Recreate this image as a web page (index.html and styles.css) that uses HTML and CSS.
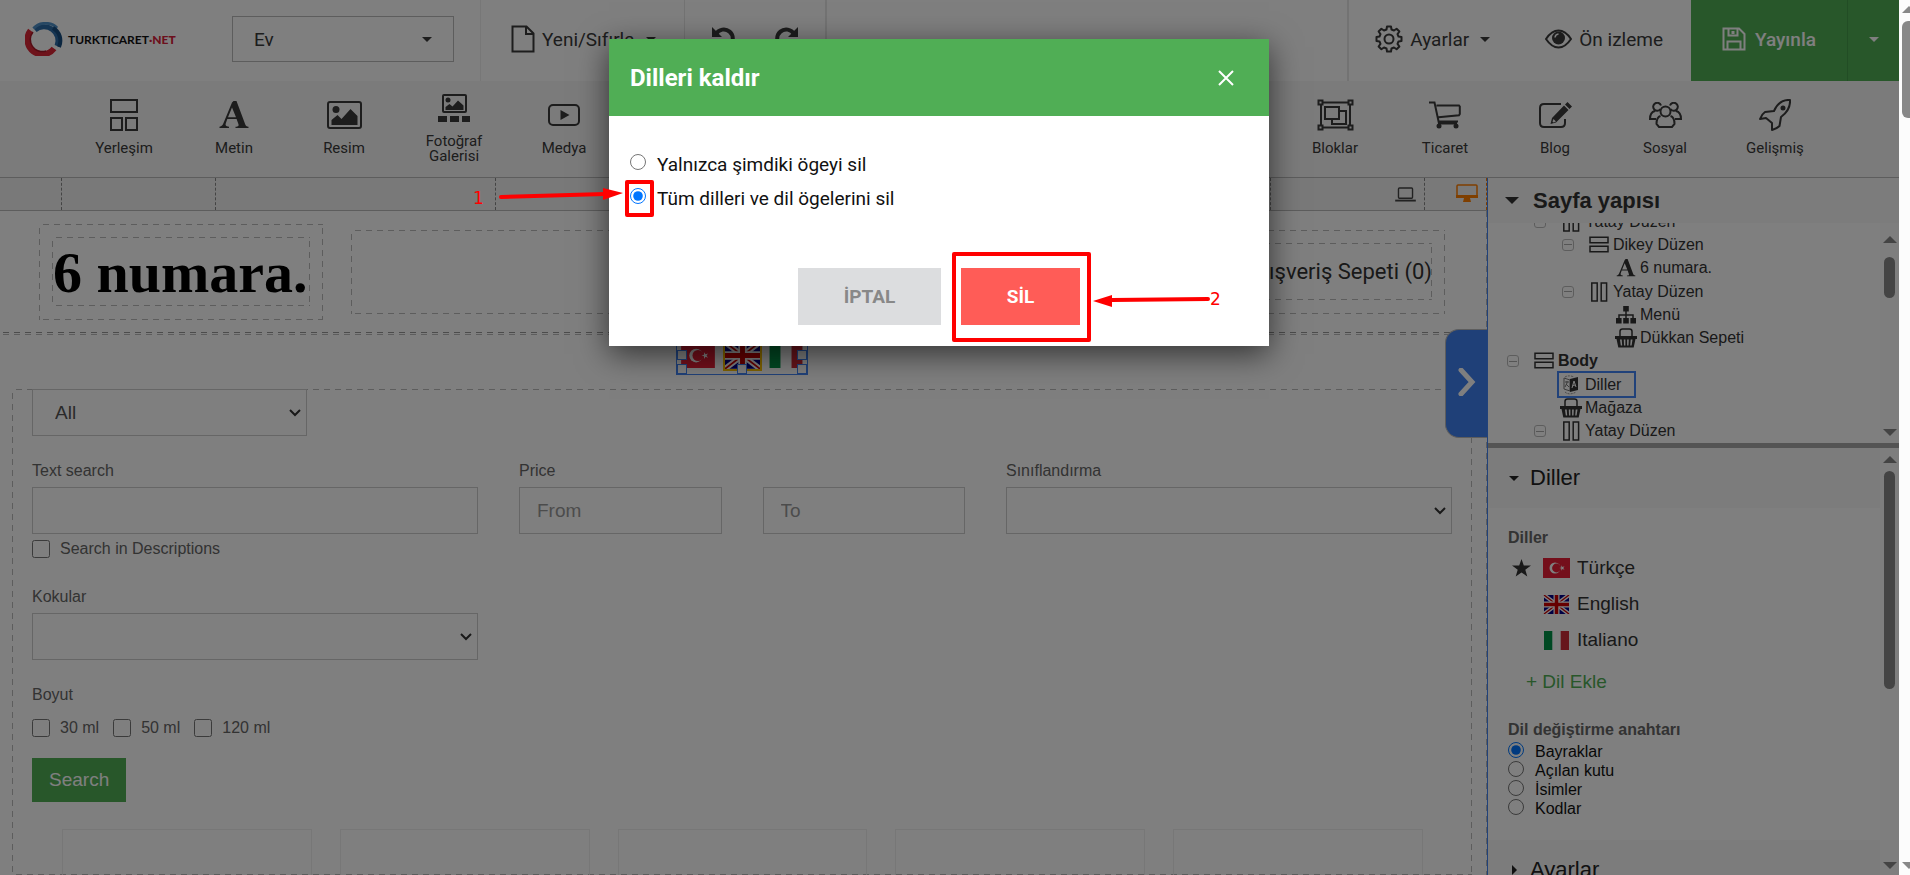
FILE: index.html
```html
<!DOCTYPE html>
<html lang="tr">
<head>
  <meta charset="UTF-8">
  <meta name="viewport" content="width=device-width, initial-scale=1.0">
  <title>Site Düzenleyici - Dilleri kaldır</title>
  <link rel="stylesheet" href="styles.css">
</head>
<body>
  <!-- shared icons -->
  <svg class="sprite" aria-hidden="true">
    <symbol id="i-rows" viewBox="0 0 20 18"><path d="M1 1.2h18v5.6H1zM1 10.2h18v5.6H1z" fill="none" stroke="currentColor" stroke-width="1.5"/></symbol>
    <symbol id="i-cols" viewBox="0 0 20 20"><path d="M2.8 1h5.4v18H2.8zM12.2 1h5.4v18h-5.4z" fill="none" stroke="currentColor" stroke-width="1.5"/></symbol>
    <symbol id="i-letter" viewBox="0 0 30 28"><path fill="currentColor" fill-rule="evenodd" d="M14.500 0h3l8.600 23c.7 1.900 1.400 2.500 3.400 2.800V27H16.500v-1.200c3-.2 3.600-.9 2.800-3L17.600 18H8.300L7 21.800c-1 2.600-.2 3.700 3 4V27H.5v-1.200c2.200-.3 3.100-1.400 4.100-4L13 1.500zM13 6.500L9 16.200h8z"/></symbol>
    <symbol id="i-basket" viewBox="0 0 22 20"><path d="M5 9V3.500C5 2 6 1 7.500 1h7C16 1 17 2 17 3.500V9" fill="none" stroke="currentColor" stroke-width="1.500"/><path fill="currentColor" fill-rule="evenodd" d="M0 8h22v3h-1.500l-1.800 8.500H3.300L1.500 11H0zM5 11.500l.8 6h1.400l-.5-6zm3.800 0l.2 6h1.400v-6zm3.300 0v6h1.400l.3-6zm3.600 0l-.5 6h1.400l.9-6z"/></symbol>
    <symbol id="i-sitemap" viewBox="0 0 20 18"><path d="M3 12V9h14v3M10 5v7" fill="none" stroke="currentColor" stroke-width="1.500"/><path fill="currentColor" d="M7.200 0h5.600v5.600H7.200zM0 12h5.600v5.600H0zM7.200 12h5.600v5.600H7.200zM14.400 12H20v5.600h-5.600z"/></symbol>
    <symbol id="flag-tr" viewBox="0 0 27 20"><path fill="#e81e36" d="M0 0h27v20H0z"/><circle cx="12" cy="10" r="5.500" fill="#fff"/><circle cx="13.500" cy="10" r="4.400" fill="#e81e36"/><path fill="#fff" d="M16.300 10l2-.6v-2.100l1.200 1.700 2-.7-1.200 1.700 1.200 1.700-2-.7-1.200 1.700v-2.100z"/></symbol>
    <symbol id="flag-gb" viewBox="0 0 25 19"><path fill="#008" d="M0 0h25v19H0z"/><path d="M0 0l25 19M25 0L0 19" stroke="#fff" stroke-width="4"/><path d="M0 0l25 19M25 0L0 19" stroke="#c00" stroke-width="1.300"/><path d="M12.500 0v19M0 9.500h25" stroke="#fff" stroke-width="6"/><path d="M12.500 0v19M0 9.500h25" stroke="#c00" stroke-width="3.500"/></symbol>
    <symbol id="flag-it" viewBox="0 0 25 19"><path fill="#fff" d="M0 0h25v19H0z"/><path fill="#009246" d="M0 0h8.300v19H0z"/><path fill="#ce2b37" d="M16.700 0H25v19h-8.300z"/></symbol>
  </svg>

  <div class="app">
    <header class="topbar">
      <a class="logo" href="#">
        <svg width="38" height="34" viewBox="0 0 38 34" fill="none">
          <path d="M10 8A14 14 0 0 1 32 24" stroke="#2d6ca8" stroke-width="5"/>
          <path d="M8.500 6.500C14 0 26-.5 32 6" stroke="#4f90c8" stroke-width="3"/>
          <path d="M5.500 8.500A14 14 0 0 0 29 26.500" stroke="#dc2636" stroke-width="6"/>
          <path d="M8 10A12 12 0 0 0 21 29" stroke="#a81828" stroke-width="1.500"/>
          <path d="M28 6C35 10 37 18 34 25" stroke="#174c80" stroke-width="4"/>
        </svg>
        <span>TURKTICARET<b>·NET</b></span>
      </a>
      <button class="page-select">Ev <i class="caret"></i></button>
      <button class="top-item item-new">
        <svg width="24" height="28" viewBox="0 0 24 28" fill="none" stroke="currentColor" stroke-width="2"><path d="M1.500 1.500h14l7 7v18h-21zM15 1.500v7.500h7.500"/></svg>
        Yeni/Sıfırla <i class="caret"></i>
      </button>
      <div class="top-item item-history">
        <button aria-label="Geri al"><svg width="26" height="26" viewBox="0 0 26 26"><path d="M5 9A9 9 0 1 1 5 18" fill="none" stroke="currentColor" stroke-width="4"/><path d="M1 2v10h10z" fill="currentColor"/></svg></button>
        <button aria-label="Yinele"><svg width="26" height="26" viewBox="0 0 26 26"><path d="M21 9A9 9 0 1 0 21 18" fill="none" stroke="currentColor" stroke-width="4"/><path d="M25 2v10H15z" fill="currentColor"/></svg></button>
      </div>
      <div class="top-right">
        <button class="top-item">
          <svg width="28" height="28" viewBox="0 0 28 28" fill="none" stroke="currentColor" stroke-width="2" stroke-linejoin="round"><circle cx="14" cy="14" r="4.500"/><path d="M11.500 4.500L12 1.500h4l.5 3 2.500 1 2.600-1.800 2.800 2.800-1.900 2.600 1 2.400 3 .5v4l-3 .5-1 2.400 1.900 2.600-2.800 2.800-2.600-1.800-2.500 1-.5 3h-4l-.5-3-2.500-1-2.600 1.800-2.800-2.800 1.900-2.600-1-2.400-3-.5v-4l3-.5 1-2.400-1.900-2.600 2.800-2.800L9 5.500z"/></svg>
          Ayarlar <i class="caret"></i>
        </button>
        <button class="top-item item-preview">
          <svg width="27" height="20" viewBox="0 0 27 20"><path d="M1 10C5 4 9 1.500 13.500 1.500S22 4 26 10c-4 6-8 8.500-12.500 8.500S5 16 1 10z" fill="none" stroke="currentColor" stroke-width="2"/><circle cx="13.500" cy="9" r="6.500" fill="currentColor"/><path d="M10 8.500A4 4 0 0 1 13.500 5" stroke="#fff" stroke-width="1.500" fill="none"/></svg>
          Ön izleme
        </button>
        <button class="publish">
          <svg width="24" height="24" viewBox="0 0 24 24" fill="none" stroke="currentColor" stroke-width="2"><path d="M1.500 1.500H17l5.500 5.500v15.500h-21zM5.500 22v-7.500h13V22M6.500 2v6.500h9V2"/><path d="M11 4v3" stroke-width="3"/></svg>
          Yayınla
        </button>
        <button class="publish-more" aria-label="Diğer"><i class="caret"></i></button>
      </div>
    </header>

    <nav class="toolbar">
      <div class="tools">
        <button class="tool"><span class="icon"><svg width="28" height="32" viewBox="0 0 28 32" fill="none" stroke="currentColor" stroke-width="2"><path d="M1 1h26v12H1zM1 19h11v12H1zM16 19h11v12H16z"/></svg></span>Yerleşim</button>
        <button class="tool"><span class="icon"><svg width="30" height="28"><use href="#i-letter"/></svg></span>Metin</button>
        <button class="tool"><span class="icon"><svg width="35" height="28" viewBox="0 0 35 28"><rect x="1" y="1" width="33" height="26" rx="2" fill="none" stroke="currentColor" stroke-width="2"/><circle cx="9" cy="8.500" r="3.500" fill="currentColor"/><path fill="currentColor" d="M4.500 24v-5l6-5 4 4 9-10 7 7v9z"/></svg></span>Resim</button>
        <button class="tool"><span class="icon"><svg width="32" height="28" viewBox="0 0 32 28"><rect x="5" y="1" width="23" height="17" rx="1" fill="none" stroke="currentColor" stroke-width="2"/><circle cx="10" cy="6" r="2.500" fill="currentColor"/><path fill="currentColor" d="M7.500 16v-3l4-3 3 2.500 5.500-6 5.500 5V16zM0 22h9v6H0zM12 22h9v6h-9zM24 22h8v6h-8z"/></svg></span>Fotoğraf Galerisi</button>
        <button class="tool"><span class="icon"><svg width="32" height="22" viewBox="0 0 32 22"><rect x="1" y="1" width="30" height="20" rx="4" fill="none" stroke="currentColor" stroke-width="2"/><path fill="currentColor" d="M12.500 6l9 5-9 5z"/></svg></span>Medya</button>
      </div>
      <div class="tools">
        <button class="tool"><span class="icon"><svg width="37" height="32" viewBox="0 0 37 32" fill="none" stroke="currentColor" stroke-width="2"><path d="M6 3.500h25M6 28.500h25M4 6v20M33 6v20M1.500 1.500h4v4h-4zM31.500 1.500h4v4h-4zM1.500 26.500h4v4h-4zM31.500 26.500h4v4h-4zM8 8h14v12H8zM22 12h7v13H15v-5"/></svg></span>Bloklar</button>
        <button class="tool"><span class="icon"><svg width="32" height="28" viewBox="0 0 32 28"><path d="M0 1.500h5.500L10 22.500h18M7.500 4.500h22.500l.8 1V13l-.8 1.200-20.500 2M9 20.500h20" fill="none" stroke="currentColor" stroke-width="2"/><circle cx="10" cy="25" r="2.500" fill="currentColor"/><circle cx="27" cy="25" r="2.500" fill="currentColor"/></svg></span>Ticaret</button>
        <button class="tool"><span class="icon"><svg width="33" height="27" viewBox="0 0 33 27"><path d="M22 2H5Q1 2 1 6v15q0 4 4 4h17q4 0 4-4v-4" fill="none" stroke="currentColor" stroke-width="2"/><path fill="currentColor" fill-rule="evenodd" d="M25 3.500l4.500 4.500L17 20.500l-5.500 1.500 1.500-6zM14.500 17l-1 2.500 1 1 2.500-1zM26 2.500L28.500 0 33 4.500 30.500 7z"/></svg></span>Blog</button>
        <button class="tool"><span class="icon"><svg width="33" height="26" viewBox="0 0 33 26" fill="none" stroke="currentColor" stroke-width="2"><circle cx="16.500" cy="9.500" r="5"/><path d="M11.500 7A4 4 0 1 1 12 3.500M21.500 7A4 4 0 1 0 21 3.500M6 9C2 10 1 13 1 17h6M27 9c4 1 5 4 5 8h-6M11.500 14C8 15 7.500 18 7.500 22l2.500 3h13l2.500-3c0-4-.5-7-4-8"/></svg></span>Sosyal</button>
        <button class="tool"><span class="icon"><svg width="32" height="32" viewBox="0 0 32 32" fill="none" stroke="currentColor" stroke-width="2" stroke-linejoin="round"><path d="M31 1c-7-.5-12 2-16 11L6 13c-3 2-4 4-5 7l6-1 6 5v7c3-1 6-2.500 7.500-4L22 18C29 13 31.500 8 31 1z"/><circle cx="24" cy="9" r="1.500" fill="currentColor"/></svg></span>Gelişmiş</button>
      </div>
    </nav>

    <div class="workspace">
      <main class="editor">
        <div class="ruler">
          <div class="step step-s"></div>
          <div class="step step-m"></div>
          <div class="step step-l"></div>
          <div class="step step-c"></div>
          <div class="step step-l"></div>
          <div class="step step-m"><svg width="21" height="15" viewBox="0 0 22 16" fill="none" stroke="currentColor"><rect x="3.500" y="1" width="15" height="11" rx="1" stroke-width="1.500"/><path d="M0 14.500h22" stroke-width="2"/></svg></div>
          <div class="step step-s active"><svg width="22" height="18" viewBox="0 0 22 18"><rect x="1" y="1" width="20" height="12" rx="1" fill="none" stroke="currentColor" stroke-width="1.500"/><path fill="currentColor" d="M0 11h22v3H14l1 4H7l1-4H0z"/></svg></div>
        </div>

        <div class="canvas">
          <div class="store-header">
            <div class="brand dashed"><h1 class="dashed">6 numara.</h1></div>
            <div class="menu-slot dashed"><a class="cart dashed" href="#">Alışveriş Sepeti (0)</a></div>
          </div>

          <div class="lang-bar">
            <div class="lang-selected">
              <svg width="34" height="25"><use href="#flag-tr"/></svg>
              <svg class="current" width="39" height="31"><use href="#flag-gb"/></svg>
              <svg width="34" height="25"><use href="#flag-it"/></svg>
              <i class="handle left middle"></i><i class="handle right middle"></i>
              <i class="handle left bottom"></i><i class="handle center bottom"></i><i class="handle right bottom"></i>
            </div>
          </div>

          <form class="store dashed">
            <select class="field category" aria-label="Kategori"><option>All</option></select>

            <div class="filters">
              <div>
                <label class="name" for="q">Text search</label>
                <input class="field" type="text" id="q">
                <label class="check"><input type="checkbox"> Search in Descriptions</label>
              </div>
              <div>
                <label class="name" for="from">Price</label>
                <div class="range">
                  <input class="field" type="text" id="from" placeholder="From">
                  <input class="field" type="text" placeholder="To" aria-label="Price to">
                </div>
              </div>
              <div>
                <label class="name" for="sort">Sınıflandırma</label>
                <select class="field" id="sort"><option></option></select>
              </div>
              <div>
                <label class="name" for="scent">Kokular</label>
                <select class="field" id="scent"><option></option></select>
              </div>
            </div>

            <p class="name size-name">Boyut</p>
            <div class="sizes">
              <label class="check"><input type="checkbox"> 30 ml</label>
              <label class="check"><input type="checkbox"> 50 ml</label>
              <label class="check"><input type="checkbox"> 120 ml</label>
            </div>
            <button class="search" type="button">Search</button>

            <div class="products">
              <div class="product"></div>
              <div class="product"></div>
              <div class="product"></div>
              <div class="product"></div>
              <div class="product"></div>
            </div>
          </form>
        </div>
        <button class="collapse" aria-label="Paneli gizle"><svg width="18" height="28" viewBox="0 0 18 28" fill="none" stroke="currentColor" stroke-width="5"><path d="M3 2l11 12L3 26" stroke-linecap="round"/></svg></button>
      </main>

      <aside class="sidebar">
        <h2 class="side-title"><i class="caret big"></i> Sayfa yapısı</h2>
        <div class="tree-panel">
          <ul class="tree">
            <li class="l1"><i class="toggle"></i><svg width="22" height="20"><use href="#i-cols"/></svg><span>Yatay Düzen</span></li>
            <li class="l2"><i class="toggle"></i><svg width="22" height="18"><use href="#i-rows"/></svg><span>Dikey Düzen</span></li>
            <li class="l3"><i class="toggle none"></i><svg width="22" height="18"><use href="#i-letter"/></svg><span>6 numara.</span></li>
            <li class="l2"><i class="toggle"></i><svg width="22" height="20"><use href="#i-cols"/></svg><span>Yatay Düzen</span></li>
            <li class="l3"><i class="toggle none"></i><svg width="22" height="18"><use href="#i-sitemap"/></svg><span>Menü</span></li>
            <li class="l3"><i class="toggle none"></i><svg width="22" height="20"><use href="#i-basket"/></svg><span>Dükkan Sepeti</span></li>
            <li class="l0"><i class="toggle"></i><svg width="22" height="18"><use href="#i-rows"/></svg><span><b>Body</b></span></li>
            <li class="l1 selected"><i class="toggle none"></i><svg width="22" height="20" viewBox="0 0 22 20"><path d="M4 3l6 2v11l-6-2z" fill="none" stroke="#777"/><path d="M10 4l8-2v13l-8 2z" fill="currentColor"/><path d="M5 7h4M7 6v2l-2 4M6 9l3 3" stroke="#777" fill="none"/><path d="M12 13l2-7 2 6M12.700 10.500l2.600-.5" stroke="#fff" fill="none"/><path d="M5 17c3 3 8 2 11 0M5 2c3-2 7-1 9 0" fill="none" stroke="#999" stroke-dasharray="2 1"/></svg><span>Diller</span></li>
            <li class="l1"><i class="toggle none"></i><svg width="22" height="20"><use href="#i-basket"/></svg><span>Mağaza</span></li>
            <li class="l1"><i class="toggle"></i><svg width="22" height="20"><use href="#i-cols"/></svg><span>Yatay Düzen</span></li>
          </ul>
          <div class="scroll"><i class="up"></i><i class="thumb"></i><i class="down"></i></div>
        </div>

        <div class="props-panel">
          <div class="props">
            <h3 class="section"><i class="caret"></i> Diller</h3>
            <div class="section-body">
              <h4>Diller</h4>
              <ul class="langs">
                <li><svg class="star" width="19" height="18" viewBox="0 0 19 18"><path fill="currentColor" d="M9.500 0l2.300 6.500H19l-5.700 4.200 2 6.800-5.800-4-5.800 4 2-6.800L0 6.500h7.200z"/></svg><svg width="27" height="20"><use href="#flag-tr"/></svg>Türkçe</li>
                <li><svg width="27" height="19"><use href="#flag-gb"/></svg>English</li>
                <li><svg width="27" height="19"><use href="#flag-it"/></svg>Italiano</li>
              </ul>
              <a class="add-lang" href="#">+ Dil Ekle</a>
              <h4>Dil değiştirme anahtarı</h4>
              <div class="switcher">
                <label><input type="radio" name="switcher" checked> Bayraklar</label>
                <label><input type="radio" name="switcher"> Açılan kutu</label>
                <label><input type="radio" name="switcher"> İsimler</label>
                <label><input type="radio" name="switcher"> Kodlar</label>
              </div>
            </div>
            <h3 class="section"><i class="caret closed"></i> Ayarlar</h3>
          </div>
          <div class="scroll props-scroll"><i class="up"></i><i class="thumb"></i><i class="down"></i></div>
        </div>
      </aside>
    </div>

    <div class="overlay">
      <div class="dialog" role="dialog" aria-labelledby="dialog-title">
        <div class="dialog-head">
          <h2 id="dialog-title">Dilleri kaldır</h2>
          <button class="close" aria-label="Kapat"><svg width="16" height="16" viewBox="0 0 16 16" stroke="currentColor" stroke-width="2"><path d="M1 1l14 14M15 1L1 15"/></svg></button>
        </div>
        <div class="dialog-body">
          <label><input type="radio" name="scope"> <span>Yalnızca şimdiki ögeyi sil</span></label>
          <label><input type="radio" name="scope" checked> <span>Tüm dilleri ve dil ögelerini sil</span></label>
        </div>
        <div class="dialog-actions">
          <button class="cancel">İPTAL</button>
          <button class="delete">SİL</button>
        </div>

        <!-- step marks -->
        <svg class="marks" width="800" height="307" viewBox="-140 0 800 307">
          <g fill="none" stroke="#f00" stroke-width="4" stroke-linejoin="round">
            <rect x="18" y="143" width="25" height="33"/>
            <rect x="345" y="215" width="135" height="86"/>
            <path d="M-108 158L-4 155" stroke-linecap="round"/>
            <path d="M599 260l-96 1" stroke-linecap="round"/>
          </g>
          <path fill="#f00" d="M-6 149l20 5-20 7zM484 262l19-6v12z"/>
          <text x="-136" y="165">1</text>
          <text x="601" y="266">2</text>
        </svg>
      </div>
    </div>
  </div>
  <div class="page-scroll"><i class="up"></i><i class="thumb"></i><i class="down"></i></div>
</body>
</html>
```
FILE: styles.css
```css
*, *::after {
  box-sizing: border-box;
}
body {
  margin: 0;
  display: flex;
  height: 100vh;
  overflow: hidden;
  background: #fff;
  color: #333;
  font-family: "Liberation Sans", Arial, sans-serif;
  font-size: 16px;
}
h1, h2, h3, h4, p, ul {
  margin: 0;
  padding: 0;
}
ul {
  list-style: none;
}
button {
  border: none;
  background: none;
  padding: 0;
  color: inherit;
  font-family: inherit;
  cursor: pointer;
}
a {
  color: inherit;
  text-decoration: none;
}
svg {
  flex: none;
}
.sprite {
  position: absolute;
  width: 0;
  height: 0;
}
.app {
  position: relative;
  flex: 1;
  min-width: 0;
  display: flex;
  flex-direction: column;
}
.caret {
  border: 5px solid transparent;
  border-top-color: currentColor;
  border-bottom: none;
}
.caret.big {
  border-width: 7px;
  border-bottom: none;
}
.caret.closed {
  border: 5px solid transparent;
  border-left-color: currentColor;
  border-right: none;
}

/* top bar */
.topbar, .toolbar {
  font-family: Roboto, sans-serif;
  color: #3a3a3a;
}
.topbar {
  display: flex;
  align-items: center;
  flex: none;
  height: 81px;
}
.logo {
  display: flex;
  align-items: center;
  gap: 5px;
  width: 208px;
  padding: 0 0 3px 25px;
  font-family: Lato, sans-serif;
  font-weight: bold;
  font-size: 12px;
  color: #111;
}
.logo b {
  font-weight: 900;
  color: #d9203a;
}
.page-select {
  display: flex;
  align-items: center;
  justify-content: space-between;
  width: 222px;
  height: 46px;
  margin: 0 26px 3px 24px;
  padding: 0 21px;
  border: 1px solid #bbb;
  font-size: 19px;
}
.top-item {
  display: flex;
  align-items: center;
  gap: 7px;
  height: 81px;
  padding-bottom: 3px;
  font-size: 19px;
}
.item-new {
  width: 204px;
  padding-left: 30px;
  border-left: 1px solid #eee;
}
.item-new .caret, .top-right .top-item .caret {
  margin-left: 4px;
}
.item-history {
  justify-content: space-around;
  width: 143px;
  padding: 0 12px 3px;
  border: solid #e6e6e6;
  border-width: 0 2px 0 1px;
}
.top-right {
  display: flex;
  margin-left: auto;
  padding-left: 26px;
  border-left: 2px solid #e6e6e6;
}
.item-preview {
  padding: 0 28px 3px 55px;
}
.publish, .publish-more {
  display: flex;
  align-items: center;
  justify-content: center;
  gap: 9px;
  height: 81px;
  padding-bottom: 3px;
  background: #50ae55;
  color: #fff;
  font-size: 19px;
  font-weight: 500;
}
.publish {
  width: 156px;
}
.publish-more {
  width: 52px;
  border-left: 1px solid #459a4a;
}

/* tool bar */
.toolbar {
  display: flex;
  justify-content: space-between;
  flex: none;
  height: 97px;
  padding: 0 69px 3px;
  background: #f7f7f7;
  border-bottom: 1px solid #bbb;
}
.tools {
  display: flex;
}
.tool {
  display: flex;
  flex-direction: column;
  align-items: center;
  justify-content: center;
  gap: 10px;
  width: 110px;
  padding: 0 20px;
  font-size: 15px;
  line-height: 15px;
}
.icon {
  display: flex;
  align-items: center;
  height: 32px;
}

/* workspace */
.workspace {
  flex: 1;
  display: flex;
  min-height: 0;
}
.editor {
  position: relative;
  flex: 1;
  min-width: 0;
  display: flex;
  flex-direction: column;
}
.ruler {
  display: flex;
  flex: none;
  height: 33px;
  background: #f3f3f3;
  border-bottom: 1px solid #bbb;
}
.step {
  display: flex;
  align-items: center;
  justify-content: flex-end;
  border-right: 1px dashed #888;
  color: #444;
}
.step-s {
  width: 62px;
}
.step-m {
  width: 154px;
  padding-right: 8px;
}
.step-l {
  width: 280px;
}
.step-c {
  flex: 1;
}
.step.active {
  padding-right: 8px;
  padding-bottom: 2px;
  color: #ff7f00;
  border-color: #ff7f00;
}
.canvas {
  flex: 1;
  display: flex;
  flex-direction: column;
  min-height: 0;
  background: repeating-linear-gradient(#bbb 0 6px, transparent 6px 11px) right / 1px 100% no-repeat;
}
.dashed {
  background:
    repeating-linear-gradient(90deg, transparent 0 4px, #bbb 4px 10px, transparent 10px 11px) top / 100% 1px no-repeat,
    repeating-linear-gradient(90deg, transparent 0 4px, #bbb 4px 10px, transparent 10px 11px) bottom / 100% 1px no-repeat,
    repeating-linear-gradient(transparent 0 4px, #bbb 4px 10px, transparent 10px 11px) left / 1px 100% no-repeat,
    repeating-linear-gradient(transparent 0 4px, #bbb 4px 10px, transparent 10px 11px) right / 1px 100% no-repeat;
}
.store-header {
  display: flex;
  align-items: center;
  flex: none;
  height: 124px;
  padding: 0 42px 3px 39px;
  background:
    repeating-linear-gradient(90deg, transparent 0 3px, #bbb 3px 9px, transparent 9px 11px) bottom / 100% 1px no-repeat,
    repeating-linear-gradient(90deg, transparent 0 3px, #999 3px 9px, transparent 9px 11px) 0 calc(100% - 2px) / 100% 1px no-repeat;
}
.brand {
  width: 284px;
  height: 96px;
  padding: 13px;
}
.brand h1 {
  height: 69px;
  padding-left: 1px;
  color: #000;
  font-family: "Liberation Serif", serif;
  font-size: 58px;
  line-height: 72px;
  white-space: nowrap;
}
.menu-slot {
  flex: 1;
  display: flex;
  align-items: center;
  justify-content: flex-end;
  height: 84px;
  margin-left: 28px;
  padding-right: 13px;
}
.cart {
  height: 57px;
  font-family: Roboto, sans-serif;
  font-size: 22px;
  line-height: 57px;
}
.lang-bar {
  display: flex;
  justify-content: center;
  flex: none;
  height: 54px;
  padding-right: 3px;
}
.lang-selected {
  position: relative;
  display: flex;
  align-items: center;
  justify-content: space-between;
  width: 132px;
  height: 40px;
  padding: 0 4px;
  border: 1px solid #4285f4;
}
.current {
  border: 2px solid #ffc400;
}
.handle {
  position: absolute;
  width: 10px;
  height: 10px;
  border: 1px solid #4285f4;
  background: #fff;
}
.handle.left {
  left: 0;
}
.handle.right {
  right: 0;
}
.handle.center {
  left: 60px;
}
.handle.middle {
  top: 14px;
}
.handle.bottom {
  bottom: 0;
}
.collapse {
  position: absolute;
  top: 151px;
  right: 0;
  width: 42px;
  height: 109px;
  border: 1px solid #bbb;
  border-right: none;
  border-radius: 14px 0 0 14px;
  background: #3e80f0;
  color: #fff;
}

/* store */
.store {
  flex: 1;
  margin: 0 15px 0 12px;
  padding: 0 20px;
  min-height: 0;
  overflow: hidden;
}
.field {
  display: block;
  width: 100%;
  height: 47px;
  padding: 0 17px;
  border: 1px solid #ccc;
  border-radius: 0;
  background: #fff;
  color: #555;
  font-family: inherit;
  font-size: 19px;
}
select.field {
  appearance: none;
  padding: 0 22px;
  background: #fff url("data:image/svg+xml,%3Csvg xmlns='http://www.w3.org/2000/svg' width='12' height='8'%3E%3Cpath d='M1 1l5 5 5-5' fill='none' stroke='%23333' stroke-width='2'/%3E%3C/svg%3E") right 5px center no-repeat;
}
.field::placeholder {
  color: #999;
}
.category {
  width: 275px;
}
.filters {
  display: grid;
  grid-template-columns: repeat(3, 1fr);
  gap: 28px 41px;
  margin-top: 25px;
}
.range {
  display: grid;
  grid-template-columns: 1fr 1fr;
  gap: 41px;
}
.name {
  display: block;
  height: 26px;
  line-height: 20px;
  color: #666;
}
.check {
  display: flex;
  align-items: center;
  gap: 10px;
  line-height: 20px;
  color: #666;
}
.check input {
  width: 18px;
  height: 18px;
  margin: 0;
}
.filters .check {
  margin-top: 5px;
}
.size-name {
  margin-top: 25px;
}
.sizes {
  display: flex;
  gap: 14px;
  margin-top: 7px;
}
.search {
  display: block;
  height: 44px;
  margin-top: 20px;
  padding: 0 17px;
  background: #50ae55;
  color: #fff;
  font-size: 19px;
}
.products {
  display: grid;
  grid-template-columns: repeat(5, 1fr);
  gap: 28px;
  margin: 27px 29px 0 30px;
}
.product {
  height: 250px;
  border: 1px solid #eee;
}

/* sidebar */
.sidebar {
  display: flex;
  flex-direction: column;
  flex: none;
  width: 412px;
  border-left: 1px solid #4285f4;
  color: #333;
}
.side-title {
  display: flex;
  align-items: center;
  gap: 14px;
  flex: none;
  height: 45px;
  padding-left: 17px;
  background: #f8f8f8;
  font-size: 22px;
}
.tree-panel {
  display: flex;
  align-items: flex-end;
  flex: none;
  height: 225px;
  overflow: hidden;
  border-bottom: 5px solid #a8a8a8;
}
.tree {
  flex: 1;
  display: grid;
  grid-auto-rows: 1fr;
  height: 233px;
}
.tree li {
  display: flex;
  align-items: center;
  padding-left: 19px;
}
.tree .l1 {
  padding-left: 46px;
}
.tree .l2 {
  padding-left: 74px;
}
.tree .l3 {
  padding-left: 101px;
}
.tree span {
  padding-left: 3px;
}
.toggle {
  width: 12px;
  height: 12px;
  margin-right: 14px;
  border: 1px solid #bbb;
  border-radius: 3px;
  background: linear-gradient(#aaa, #aaa) center / 8px 1px no-repeat;
}
.toggle.none {
  visibility: hidden;
}
.selected {
  position: relative;
}
.selected::after {
  content: "";
  position: absolute;
  left: 69px;
  top: -2px;
  width: 79px;
  height: 27px;
  border: 2px solid #4285f4;
}
.scroll {
  display: flex;
  flex-direction: column;
  align-items: center;
  flex: none;
  align-self: stretch;
  width: 19px;
  padding: 13px 0 7px;
  background: #fcfcfc;
}
.up, .down {
  border: 7px solid transparent;
  border-bottom-color: #888;
  border-top: none;
}
.down {
  margin-top: auto;
  border: 7px solid transparent;
  border-top-color: #888;
  border-bottom: none;
}
.thumb {
  width: 11px;
  height: 41px;
  margin-top: 14px;
  border-radius: 6px;
  background: #888;
}
.props-scroll {
  padding: 8px 0 6px;
}
.props-scroll .thumb {
  height: 218px;
  margin-top: 8px;
}
.props-panel {
  flex: 1;
  display: flex;
  min-height: 0;
  overflow: hidden;
}
.props {
  flex: 1;
}
.section {
  display: flex;
  align-items: center;
  gap: 11px;
  height: 60px;
  padding-left: 21px;
  background: #f8f8f8;
  font-size: 22px;
  font-weight: normal;
  color: #222;
}
.closed {
  margin: 0 2px 0 3px;
}
.section-body {
  height: 332px;
  padding: 20px 20px 0;
}
.section-body h4 {
  line-height: 20px;
  color: #666;
}
.langs {
  padding-top: 2px;
  font-size: 19px;
}
.langs li {
  display: flex;
  align-items: center;
  gap: 7px;
  height: 36px;
  padding-left: 35px;
}
.langs li:first-child {
  padding-left: 4px;
}
.star {
  margin-right: 5px;
}
.add-lang {
  display: block;
  padding: 12px 0 26px 18px;
  font-size: 19px;
  line-height: 24px;
  color: #50ae55;
}
.switcher {
  padding-top: 1px;
  color: #111;
}
.switcher label {
  display: flex;
  gap: 11px;
  height: 19px;
  line-height: 22px;
}
.switcher input {
  width: 16px;
  height: 16px;
  margin: 1px 0 0;
}

/* dialog */
.overlay {
  position: absolute;
  inset: 0;
  padding: 39px 21px 0 0;
  background: rgba(0, 0, 0, 0.5);
}
.dialog {
  position: relative;
  width: 660px;
  margin: 0 auto;
  background: #fff;
  box-shadow: 0 8px 30px rgba(0, 0, 0, 0.6);
  color: #111;
  font-family: Roboto, sans-serif;
}
.dialog-head {
  display: flex;
  align-items: center;
  justify-content: space-between;
  height: 77px;
  padding: 0 35px 0 21px;
  background: #50ae55;
  color: #fff;
}
.dialog-head h2 {
  font-size: 24px;
}
.close {
  height: 16px;
}
.dialog-body {
  padding: 31px 21px 0;
  font-size: 19px;
}
.dialog-body label {
  display: flex;
  align-items: center;
  gap: 11px;
  height: 34px;
}
.dialog-body input {
  width: 16px;
  height: 16px;
  margin: 0 0 5px;
}
.dialog-actions {
  display: flex;
  justify-content: center;
  gap: 20px;
  padding: 53px 0 21px;
}
.dialog-actions button {
  width: 143px;
  height: 57px;
  font-size: 19px;
  font-weight: bold;
}
.dialog-actions .cancel {
  background: #dcdddf;
  color: #888;
}
.dialog-actions .delete {
  width: 119px;
  background: #ff5c57;
  color: #fff;
}
.marks {
  position: absolute;
  top: 0;
  left: -140px;
  pointer-events: none;
}
.marks text {
  fill: #f00;
  font-family: "DejaVu Sans", sans-serif;
  font-size: 17px;
}

/* browser scroll bar */
.page-scroll {
  display: flex;
  flex-direction: column;
  flex: none;
  width: 11px;
  padding: 6px 0 6px 3px;
  overflow: hidden;
  background: #fcfcfc;
}
.page-scroll i {
  flex: none;
  align-self: flex-start;
}
.page-scroll .thumb {
  width: 14px;
  height: 97px;
  margin-top: 8px;
}
```
